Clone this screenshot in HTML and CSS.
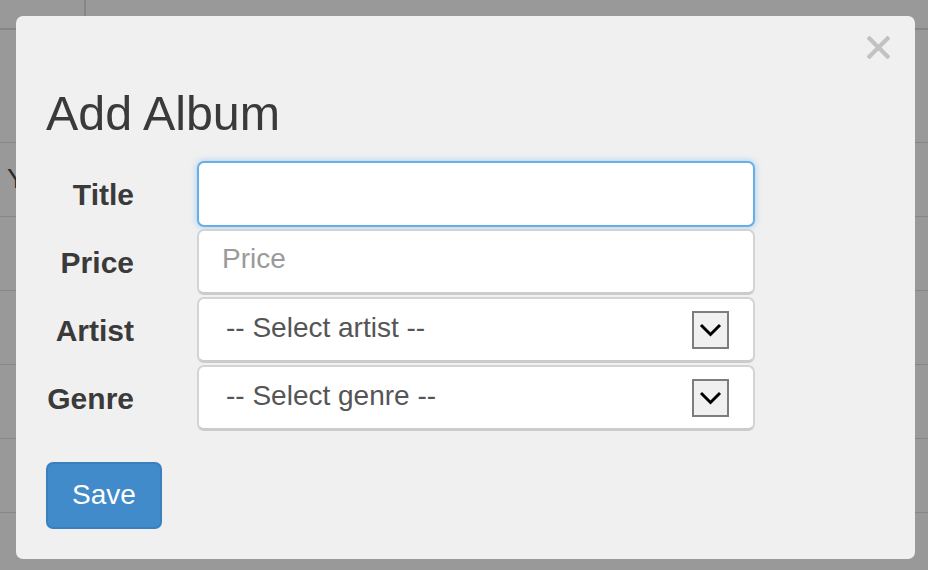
FILE: index.html
```html
<!DOCTYPE html>
<html>
<head>
<meta charset="utf-8">
<link rel="stylesheet" href="styles.css">
</head>
<body>
<div class="page">
  <div class="row row-head"><div class="cell cell-a"></div><div class="cell"></div></div>
  <div class="row row-tall"></div>
  <div class="row"><span class="ytext">Y</span></div>
  <div class="row"></div>
  <div class="row"></div>
  <div class="row"></div>
  <div class="row"></div>
  <div class="row"></div>
</div>

<div class="modal">
  <button class="close" aria-label="Close">
    <svg width="23" height="23" viewBox="0 0 23 23"><path d="M2.5 2.5 L20.5 20.5 M20.5 2.5 L2.5 20.5" stroke="#c2c2c2" stroke-width="4.2" stroke-linecap="square" fill="none"/></svg>
  </button>
  <h4 class="modal-title">Add Album</h4>
  <form class="form">
    <label class="lbl">Title</label>
    <input class="ctl focus" type="text">
    <label class="lbl">Price</label>
    <input class="ctl" type="text" placeholder="Price">
    <label class="lbl">Artist</label>
    <div class="ctl select"><span>-- Select artist --</span><span class="arrow"><svg width="33" height="34" viewBox="0 0 33 34"><path d="M7 12 L16.5 21.5 L26 12" stroke="#000" stroke-width="3" fill="none"/></svg></span></div>
    <label class="lbl">Genre</label>
    <div class="ctl select"><span>-- Select genre --</span><span class="arrow"><svg width="33" height="34" viewBox="0 0 33 34"><path d="M7 12 L16.5 21.5 L26 12" stroke="#000" stroke-width="3" fill="none"/></svg></span></div>
  </form>
  <div class="actions"><button class="btn" type="button">Save</button></div>
</div>
</body>
</html>
```

FILE: styles.css
```css
html, body {
  margin: 0;
  padding: 0;
}
body {
  background: #999999;
  width: 928px;
  height: 570px;
  overflow: hidden;
  font-family: "Liberation Sans", Arial, sans-serif;
  position: relative;
}
.page {
  display: flex;
  flex-direction: column;
}
.row {
  height: 73px;
  border-bottom: 1px solid #868686;
  display: flex;
  align-items: center;
}
.row-head {
  height: 28px;
  border-bottom: 2px solid #868686;
  align-items: stretch;
}
.row-tall {
  height: 112px;
}
.cell-a {
  width: 84px;
  border-right: 2px solid #868686;
}
.ytext {
  font-size: 28px;
  color: #2a2a2a;
  margin-left: 7px;
  margin-top: -1px;
}
.modal {
  position: absolute;
  left: 16px;
  top: 16px;
  width: 899px;
  box-sizing: border-box;
  background: #f0f0f0;
  border-radius: 7px;
  padding: 69px 30px 30px 30px;
  display: flex;
  flex-direction: column;
  align-items: flex-start;
}
.close {
  position: absolute;
  top: 20px;
  right: 25px;
  width: 23px;
  height: 23px;
  padding: 0;
  margin: 0;
  border: 0;
  background: none;
  display: block;
}
.close svg { display: block; }
.modal-title {
  margin: 0;
  font-size: 48.4px;
  line-height: 56px;
  font-weight: normal;
  color: #3a3a3a;
}
.form {
  margin-top: 20px;
  display: grid;
  grid-template-columns: 88px 558px;
  column-gap: 63px;
  row-gap: 2px;
  align-items: center;
}
.lbl {
  text-align: right;
  font-weight: bold;
  font-size: 30px;
  color: #3a3a3a;
  white-space: nowrap;
  padding-top: 2px;
}
.ctl {
  box-sizing: border-box;
  height: 66px;
  width: 558px;
  margin: 0;
  background: #ffffff;
  border: 2px solid #d3d3d3;
  border-bottom: 3px solid #cbcbcb;
  border-radius: 7px;
  font-family: "Liberation Sans", Arial, sans-serif;
  font-size: 28px;
  color: #555555;
  padding: 0 0 6px 23px;
  outline: none;
}
.ctl::placeholder {
  color: #9a9a9a;
}
.focus {
  border: 2px solid #66afe9;
  box-shadow: 0 0 7px rgba(102, 175, 233, 0.55);
}
.select {
  display: flex;
  align-items: center;
  justify-content: space-between;
  padding: 0 24px 0 27px;
}
.select span:first-child {
  margin-top: -4px;
}
.arrow {
  box-sizing: border-box;
  width: 37px;
  height: 38px;
  border: 2px solid #7d7d7d;
  background: #f0f0f0;
  display: block;
}
.arrow svg { display: block; }
.actions {
  margin-top: 31px;
}
.btn {
  box-sizing: border-box;
  width: 116px;
  height: 67px;
  background: #428bca;
  border: 2px solid #3a80bf;
  border-radius: 7px;
  color: #ffffff;
  font-family: "Liberation Sans", Arial, sans-serif;
  font-size: 28px;
  padding: 0 0 2px 0;
  display: block;
}
```
